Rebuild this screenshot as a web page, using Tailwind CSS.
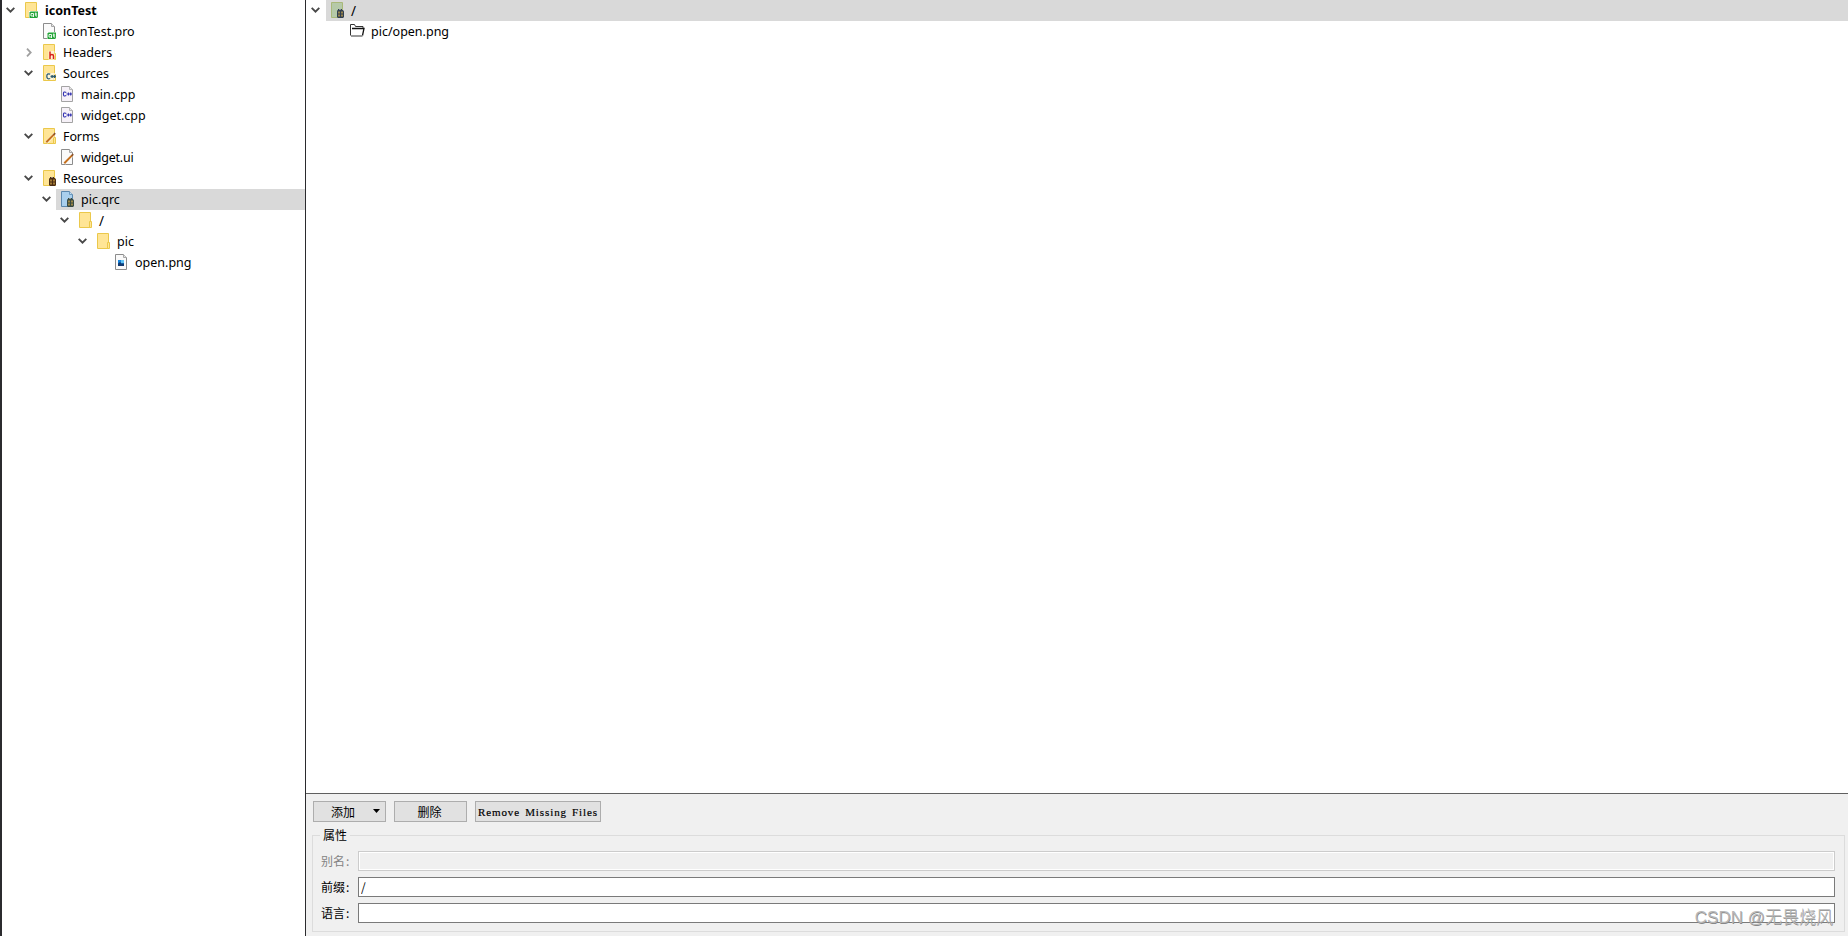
<!doctype html>
<html lang="zh-CN">
  <head>
    <meta charset="UTF-8" />
    <meta name="viewport" content="width=device-width, initial-scale=1.0" />
    <title>iconTest</title>
    <script src="https://cdn.jsdelivr.net/npm/@tailwindcss/browser@4"></script>
  </head>
  <body class="flex h-screen overflow-hidden bg-white text-black font-['Noto_Sans','Noto_Sans_CJK_SC',sans-serif]">
    <!-- shared icons -->
    <svg class="hidden">
      <symbol id="down" viewBox="0 0 9 6"><path d="M.7.9 4.500 4.600 8.300.9" fill="none" stroke="#484848" stroke-width="1.900" /></symbol>
      <symbol id="right" viewBox="0 0 6 9"><path d="M1 .7 4.700 4.500 1 8.300" fill="none" stroke="#a0a0a0" stroke-width="1.800" /></symbol>
      <symbol id="folder" viewBox="0 0 16 16">
        <path d="M1.500.5h11v15h-11z" fill="#ffe596" stroke="#ebc84b" />
        <path d="M11.500 9.500h2v6h-2z" fill="#ffe596" stroke="#ebc84b" />
      </symbol>
      <symbol id="file" viewBox="0 0 16 16">
        <path d="M1.500.5h8l3 3v12h-11z" fill="#fafafa" stroke="#8c8c8c" />
        <path d="M9.500.5v3h3" fill="#e6e6e6" stroke="#a8a8a8" />
      </symbol>
      <symbol id="file-cpp" viewBox="0 0 16 16">
        <path d="M1.500.5h8l3 3v12h-11z" fill="#f6f1f8" stroke="#a3a3a3" />
        <path d="M9.500.5v3h3" fill="#e6e6e6" stroke="#b8b8b8" />
        <path d="M6.300 6.400Q3.400 5 3.400 8t2.900 1.600M6.500 8H12M8.400 6.600v2.800M10.700 6.600v2.800" fill="none" stroke="#3030b0" stroke-width="1.100" />
      </symbol>
      <symbol id="qt" viewBox="0 0 16 16">
        <path d="M5 9h9v7H5z" fill="#fff" />
        <path d="M6.500 9.500H14v5.500l-1 1H5.500v-5.500z" fill="#22a336" />
        <path d="M7 11.500h2.500V14H7zM9 14l1 1M11.800 10.500V14h1.400M10.800 12h2.400" fill="none" stroke="#fff" stroke-width=".9" />
      </symbol>
      <symbol id="pen" viewBox="0 0 16 16">
        <path d="m4.300 14.600 8.700-9" stroke="#fff" stroke-width="3.400" opacity=".6" />
        <path d="m4.300 14.200 7.700-7.800" stroke="#c4701f" stroke-width="2" />
        <path d="m11.600 6.800 1.600-1.600" stroke="#8a5128" stroke-width="1.800" />
      </symbol>
      <symbol id="gift" viewBox="0 0 16 16">
        <path d="M8 7h4v1h1l1 1.500V15l-1 1H8l-1-1V9.500L7.500 8H8z" fill="currentColor" />
        <path d="M9 7h2v1H9z" fill="#fff" opacity=".45" />
        <path d="M8 9.500h2v2H8zM11 9.500h2v2h-2zM8 12.500h2v2H8zM11 12.500h2v2h-2z" fill="#e0b04a" opacity=".6" />
      </symbol>
    </svg>

    <div class="w-[2px] shrink-0 bg-[#2b2b2e]"></div>

    <!-- project tree -->
    <aside class="w-[304px] shrink-0 border-r border-[#2b2b2e] text-[12.5px] leading-[21px]">
      <div class="flex h-[21px] items-center">
        <div class="w-[18px] pl-1"><svg class="mb-px h-1.5 w-[9px]"><use href="#down" /></svg></div>
        <div class="flex flex-1 items-center gap-[5px] pl-1">
          <svg class="mb-px size-4"><use href="#folder" /><use href="#qt" /></svg><b>iconTest</b>
        </div>
      </div>
      <div class="flex h-[21px] items-center pl-[18px]">
        <div class="w-[18px]"></div>
        <div class="flex flex-1 items-center gap-[5px] pl-1">
          <svg class="mb-px size-4"><use href="#file" /><use href="#qt" /></svg><span>iconTest.pro</span>
        </div>
      </div>
      <div class="flex h-[21px] items-center pl-[18px]">
        <div class="w-[18px] pl-1.5"><svg class="h-[9px] w-1.5"><use href="#right" /></svg></div>
        <div class="flex flex-1 items-center gap-[5px] pl-1">
          <svg class="mb-px size-4"><use href="#folder" /><path d="M6.500 7h6v9h-6z" fill="#fff" opacity=".55" /><path d="M8 7.500V15M8 12q.3-1.600 1.900-1.600T11.500 12v3" fill="none" stroke="#d8231c" stroke-width="1.500" /></svg><span>Headers</span>
        </div>
      </div>
      <div class="flex h-[21px] items-center pl-[18px]">
        <div class="w-[18px] pl-1"><svg class="mb-px h-1.5 w-[9px]"><use href="#down" /></svg></div>
        <div class="flex flex-1 items-center gap-[5px] pl-1">
          <svg class="mb-px size-4"><use href="#folder" /><path d="M4 8h9v7H4z" fill="#fff" opacity=".6" /><path d="M8.200 9.200Q4.800 8 4.800 11.300t3.400 2.200M8.500 11.500H14M10.100 10v3M12.600 10v3" fill="none" stroke="#2d5c73" stroke-width="1.300" /></svg><span>Sources</span>
        </div>
      </div>
      <div class="flex h-[21px] items-center pl-[36px]">
        <div class="w-[18px]"></div>
        <div class="flex flex-1 items-center gap-[5px] pl-1">
          <svg class="mb-px size-4"><use href="#file-cpp" /></svg><span>main.cpp</span>
        </div>
      </div>
      <div class="flex h-[21px] items-center pl-[36px]">
        <div class="w-[18px]"></div>
        <div class="flex flex-1 items-center gap-[5px] pl-1">
          <svg class="mb-px size-4"><use href="#file-cpp" /></svg><span>widget.cpp</span>
        </div>
      </div>
      <div class="flex h-[21px] items-center pl-[18px]">
        <div class="w-[18px] pl-1"><svg class="mb-px h-1.5 w-[9px]"><use href="#down" /></svg></div>
        <div class="flex flex-1 items-center gap-[5px] pl-1">
          <svg class="mb-px size-4"><use href="#folder" /><use href="#pen" /></svg><span class="tracking-[-0.1px]">Forms</span>
        </div>
      </div>
      <div class="flex h-[21px] items-center pl-[36px]">
        <div class="w-[18px]"></div>
        <div class="flex flex-1 items-center gap-[5px] pl-1">
          <svg class="mb-px size-4"><use href="#file" /><use href="#pen" /></svg><span class="tracking-[-0.2px]">widget.ui</span>
        </div>
      </div>
      <div class="flex h-[21px] items-center pl-[18px]">
        <div class="w-[18px] pl-1"><svg class="mb-px h-1.5 w-[9px]"><use href="#down" /></svg></div>
        <div class="flex flex-1 items-center gap-[5px] pl-1">
          <svg class="mb-px size-4 text-[#4a2c14]"><use href="#folder" /><use href="#gift" /></svg><span>Resources</span>
        </div>
      </div>
      <div class="flex h-[21px] items-center pl-[36px]">
        <div class="w-[18px] pl-1"><svg class="mb-px h-1.5 w-[9px]"><use href="#down" /></svg></div>
        <div class="flex h-[21px] flex-1 items-center gap-[5px] bg-[#d9d9d9] pl-1">
          <svg class="mb-px size-4 text-[#384a44]"><path d="M1.500.5h8l3 3v12h-11z" fill="#a9cfed" stroke="#5b87ad" /><path d="M9.500.5v3h3" fill="#c5def2" stroke="#6d99bd" /><use href="#gift" /></svg><span>pic.qrc</span>
        </div>
      </div>
      <div class="flex h-[21px] items-center pl-[54px]">
        <div class="w-[18px] pl-1"><svg class="mb-px h-1.5 w-[9px]"><use href="#down" /></svg></div>
        <div class="flex flex-1 items-center gap-[5px] pl-1">
          <svg class="mb-px size-4"><use href="#folder" /></svg><span class="pt-px text-[13.5px]">/</span>
        </div>
      </div>
      <div class="flex h-[21px] items-center pl-[72px]">
        <div class="w-[18px] pl-1"><svg class="mb-px h-1.5 w-[9px]"><use href="#down" /></svg></div>
        <div class="flex flex-1 items-center gap-[5px] pl-1">
          <svg class="mb-px size-4"><use href="#folder" /></svg><span>pic</span>
        </div>
      </div>
      <div class="flex h-[21px] items-center pl-[90px]">
        <div class="w-[18px]"></div>
        <div class="flex flex-1 items-center gap-[5px] pl-1">
          <svg class="mb-px size-4"><use href="#file" /><path d="M4 6h6v6H4z" fill="#1583dc" /><path d="M7 6h3v3H7z" fill="#63c4f4" /><path d="m4 12V9.500L6 8l2 2 1-1 1 1v2z" fill="#143b70" /></svg><span>open.png</span>
        </div>
      </div>
    </aside>

    <!-- resource editor -->
    <main class="flex min-w-0 flex-1 flex-col">
      <div class="flex-1 text-[12.5px] leading-[21px]">
        <div class="flex h-[21px] items-center">
          <div class="w-5 pl-[5px]"><svg class="mb-px h-1.5 w-[9px]"><use href="#down" /></svg></div>
          <div class="flex h-[21px] flex-1 items-center gap-[5px] bg-[#d9d9d9] pl-1">
            <svg class="mb-px size-4 text-[#303f50]"><path d="M1.500.5h11v15h-11z" fill="#b5c9a8" stroke="#a9b879" /><use href="#gift" /></svg><span class="pt-px text-[13.5px]">/</span>
          </div>
        </div>
        <div class="flex h-[21px] items-center gap-[5px] pl-[43px]">
          <svg class="mb-px h-4 w-[17px]" fill="none"><path d="M1.500 12.500V1.500h4l1 2h7.500v2" stroke="#333" /><path d="M3 5.500H15L13.500 12.500" stroke="#111" stroke-width="1.300" /><path d="M2 13h11.500" stroke="#777" stroke-width="1.500" /></svg><span>pic/open.png</span>
        </div>
      </div>

      <div class="h-[143px] border-t border-[#606060] bg-[#f0f0f0] pt-[7px] pl-[7px] pr-[3px] text-xs leading-[14px] font-['Noto_Sans_CJK_SC',sans-serif]">
        <div class="flex h-[21px] gap-2">
          <button class="flex w-[73px] items-center border border-[#adadad] bg-[#e1e1e1] pl-[17px]">
            添加<svg class="mb-0.5 ml-[18px] h-1 w-[7px]"><path d="M0 0h7L3.500 4z" /></svg>
          </button>
          <button class="w-[73px] border border-[#adadad] bg-[#e1e1e1] pr-[2px]">删除</button>
          <button class="w-[126px] border border-[#adadad] bg-[#e1e1e1] text-[11px] tracking-[0.9px] whitespace-nowrap [word-spacing:1.5px] [-webkit-text-stroke:0.2px_#000] font-['Liberation_Serif',serif]">Remove Missing Files</button>
        </div>
        <fieldset class="relative mt-[13px] -ml-px h-[97px] border border-[#dcdcdc] pt-[15px] pr-[9px] pl-[9px]">
          <span class="absolute -top-2 left-[7px] bg-[#f0f0f0] px-[3px]">属性</span>
          <div class="flex flex-col gap-1.5">
            <label class="flex h-5 items-center text-[#838383]"><span class="-ml-px w-[37px]">别名<span class="ml-px">:</span></span><input disabled class="h-5 flex-1 border border-[#cccccc] bg-[#f0f0f0] shadow-[inset_0_0_0_1px_#fff]" /></label>
            <label class="flex h-5 items-center"><span class="-ml-px w-[37px]">前缀<span class="ml-px">:</span></span><input value="/" class="h-5 flex-1 border border-[#7a7a7a] bg-white px-0.5 pb-0.5" /></label>
            <label class="flex h-5 items-center"><span class="-ml-px w-[37px]">语言<span class="ml-px">:</span></span><input class="h-5 flex-1 border border-[#7a7a7a] bg-white" /></label>
          </div>
        </fieldset>
      </div>
    </main>

    <div class="absolute right-[15px] bottom-1.5 text-[17px] leading-6 font-light whitespace-nowrap text-[#b8b8b8] [text-shadow:0.5px_1px_0.5px_#888] font-['Liberation_Sans','Noto_Sans_CJK_SC',sans-serif]">CSDN @无畏烧风</div>
  </body>
</html>
